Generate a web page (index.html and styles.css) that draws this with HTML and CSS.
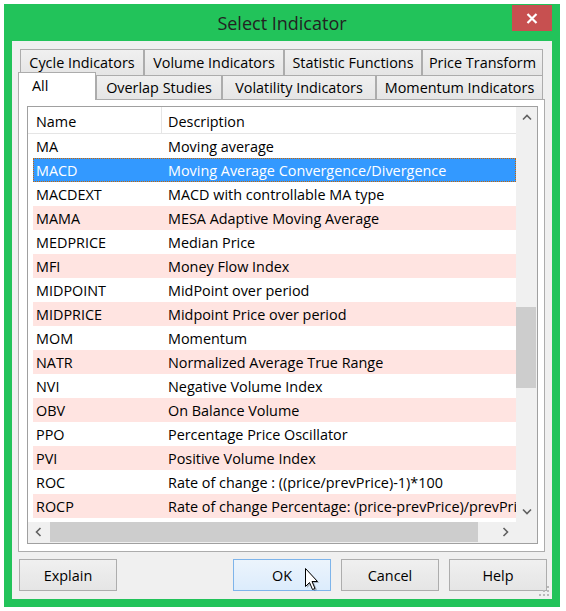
FILE: index.html
```html
<!DOCTYPE html>
<html>
<head>
<meta charset="utf-8">
<title>Select Indicator</title>
<link rel="stylesheet" href="styles.css">
</head>
<body>
<div class="window">
  <div class="titlebar">
    <div class="title">Select Indicator</div>
    <div class="close">
      <svg width="12" height="11" viewBox="0 0 12 11"><path d="M1.5 1 L10.5 10 M10.5 1 L1.5 10" stroke="#fff" stroke-width="2.2" fill="none"/></svg>
    </div>
  </div>
  <div class="client">
    <div class="tabctl">
      <div class="tabrow row-top">
        <div class="tab w-cycle">Cycle Indicators</div>
        <div class="tab w-volume">Volume Indicators</div>
        <div class="tab w-stat">Statistic Functions</div>
        <div class="tab w-price">Price Transform</div>
      </div>
      <div class="tabrow row-bottom">
        <div class="tab active w-all">All</div>
        <div class="tab w-overlap">Overlap Studies</div>
        <div class="tab w-volat">Volatility Indicators</div>
        <div class="tab w-mom">Momentum Indicators</div>
      </div>
      <div class="panel">
        <div class="listview">
          <div class="lv-main">
            <div class="lv-content">
              <div class="lv-header">
                <div class="hcell hname">Name</div>
                <div class="hcell hdesc">Description</div>
              </div>
              <div class="lv-rows">
                <div class="row"><div class="cell n">MA</div><div class="cell d">Moving average</div></div>
                <div class="row sel"><div class="cell n">MACD</div><div class="cell d">Moving Average Convergence/Divergence</div></div>
                <div class="row"><div class="cell n">MACDEXT</div><div class="cell d">MACD with controllable MA type</div></div>
                <div class="row alt"><div class="cell n">MAMA</div><div class="cell d">MESA Adaptive Moving Average</div></div>
                <div class="row"><div class="cell n">MEDPRICE</div><div class="cell d">Median Price</div></div>
                <div class="row alt"><div class="cell n">MFI</div><div class="cell d">Money Flow Index</div></div>
                <div class="row"><div class="cell n">MIDPOINT</div><div class="cell d">MidPoint over period</div></div>
                <div class="row alt"><div class="cell n">MIDPRICE</div><div class="cell d">Midpoint Price over period</div></div>
                <div class="row"><div class="cell n">MOM</div><div class="cell d">Momentum</div></div>
                <div class="row alt"><div class="cell n">NATR</div><div class="cell d">Normalized Average True Range</div></div>
                <div class="row"><div class="cell n">NVI</div><div class="cell d">Negative Volume Index</div></div>
                <div class="row alt"><div class="cell n">OBV</div><div class="cell d">On Balance Volume</div></div>
                <div class="row"><div class="cell n">PPO</div><div class="cell d">Percentage Price Oscillator</div></div>
                <div class="row alt"><div class="cell n">PVI</div><div class="cell d">Positive Volume Index</div></div>
                <div class="row"><div class="cell n">ROC</div><div class="cell d">Rate of change : ((price/prevPrice)-1)*100</div></div>
                <div class="row alt"><div class="cell n">ROCP</div><div class="cell d">Rate of change Percentage: (price-prevPrice)/prevPrice</div></div>
              </div>
            </div>
            <div class="vscroll">
              <div class="sb-btn"><svg width="10" height="7" viewBox="0 0 10 7"><polyline points="1,5.5 5,1.5 9,5.5" fill="none" stroke="#606060" stroke-width="1.6"/></svg></div>
              <div class="vthumb"></div>
              <div class="sb-space"></div>
              <div class="sb-btn"><svg width="10" height="7" viewBox="0 0 10 7"><polyline points="1,1.5 5,5.5 9,1.5" fill="none" stroke="#606060" stroke-width="1.6"/></svg></div>
            </div>
          </div>
          <div class="lv-bottom">
            <div class="hscroll">
              <div class="sb-btn hbtn"><svg width="7" height="10" viewBox="0 0 7 10"><polyline points="5.5,1 1.5,5 5.5,9" fill="none" stroke="#606060" stroke-width="1.6"/></svg></div>
              <div class="hthumb"></div>
              <div class="sb-space"></div>
              <div class="sb-btn hbtn"><svg width="7" height="10" viewBox="0 0 7 10"><polyline points="1.5,1 5.5,5 1.5,9" fill="none" stroke="#606060" stroke-width="1.6"/></svg></div>
            </div>
            <div class="corner"></div>
          </div>
        </div>
      </div>
    </div>
    <div class="buttons">
      <button class="btn btn-explain">Explain</button>
      <button class="btn btn-ok">OK</button>
      <button class="btn">Cancel</button>
      <button class="btn">Help</button>
    </div>
    <svg class="cursor" width="16" height="24" viewBox="0 0 16 24">
      <polygon points="2,2 2,20 6,16 9,23 12,22 9,15 14.5,15" fill="#000" opacity="0.25"/>
      <polygon points="0.5,0.5 0.5,18.5 4.5,14.5 7.5,21.5 10,20.5 7,13.5 12.5,13.5" fill="#fff" stroke="#000" stroke-width="1" stroke-linejoin="miter"/>
    </svg>
    <svg class="grip" width="12" height="12" viewBox="0 0 12 12">
      <rect x="9" y="1" width="2" height="2" fill="#b9b9b9"/>
      <rect x="5" y="5" width="2" height="2" fill="#b9b9b9"/>
      <rect x="9" y="5" width="2" height="2" fill="#b9b9b9"/>
      <rect x="1" y="9" width="2" height="2" fill="#b9b9b9"/>
      <rect x="5" y="9" width="2" height="2" fill="#b9b9b9"/>
      <rect x="9" y="9" width="2" height="2" fill="#b9b9b9"/>
    </svg>
  </div>
</div>
</body>
</html>
```

FILE: styles.css
```css
html, body {
  margin: 0;
  padding: 0;
  background: #ffffff;
}

body {
  font-family: "Open Sans", "Noto Sans", "DejaVu Sans", sans-serif;
  font-size: 14.4px;
  color: #000;
}

.window {
  margin: 4px 0 0 4px;
  width: 556px;
  height: 603px;
  box-sizing: border-box;
  background: #22c35a;
  padding: 0 8px 8px 8px;
  display: flex;
  flex-direction: column;
}

.titlebar {
  height: 37px;
  flex: none;
  display: grid;
  grid-template-columns: 1fr auto 1fr;
  align-items: start;
}

.title {
  grid-column: 2;
  font-size: 18px;
  line-height: 38px;
  color: #222;
  white-space: nowrap;
}

.close {
  grid-column: 3;
  justify-self: end;
  margin-top: 1px;
  width: 40px;
  height: 26px;
  background: #c75050;
  display: flex;
  align-items: center;
  justify-content: center;
}

.client {
  flex: 1;
  background: #f0f0f0;
  padding: 8px 7px 8px 6px;
  display: flex;
  flex-direction: column;
  position: relative;
}

.tabctl {
  width: 527px;
  display: flex;
  flex-direction: column;
}

.tabrow {
  display: flex;
  flex: none;
}

.row-top {
  padding-left: 2px;
  height: 26px;
}

.row-bottom {
  height: 24px;
}

.tab {
  box-sizing: border-box;
  border: 1px solid #acacac;
  border-bottom: 0;
  background: linear-gradient(#f0f0f0, #e5e5e5);
  display: flex;
  align-items: center;
  justify-content: center;
  white-space: nowrap;
  flex: none;
}

.row-top .tab { height: 26px; }
.row-bottom .tab { height: 24px; }

.row-bottom .tab.active {
  height: 28px;
  margin-top: -3px;
  background: #fff;
  justify-content: flex-start;
  padding-left: 13px;
  padding-bottom: 2px;
  position: relative;
  z-index: 1;
}

.w-cycle { width: 124px; }
.w-volume { width: 140px; }
.w-stat { width: 138px; }
.w-price { width: 121px; }
.w-all { width: 78px; }
.w-overlap { width: 126px; }
.w-volat { width: 154px; }
.w-mom { width: 167px; }

.panel {
  box-sizing: border-box;
  height: 453px;
  border: 1px solid #acacac;
  background: #fff;
  padding: 6px 6px 7px 8px;
}

.listview {
  box-sizing: border-box;
  width: 511px;
  height: 438px;
  border: 1px solid #a0a0a0;
  display: flex;
  flex-direction: column;
}

.lv-main {
  display: flex;
  height: 415px;
  flex: none;
}

.lv-content {
  width: 488px;
  overflow: hidden;
  background: #fff;
}

.lv-header {
  height: 26px;
  border-bottom: 1px solid #e5e5e5;
  display: flex;
}

.hcell {
  line-height: 26px;
  padding-top: 2px;
  box-sizing: border-box;
  white-space: nowrap;
}

.hname {
  width: 134px;
  padding-left: 8px;
  border-right: 1px solid #e5e5e5;
}

.hdesc {
  padding-left: 6px;
}

.row {
  margin-left: 5px;
  width: 483px;
  height: 24px;
  display: grid;
  grid-template-columns: 129px 1fr;
  align-items: center;
  overflow: hidden;
}

.cell {
  white-space: nowrap;
  overflow: hidden;
}

.cell.n { padding-left: 3px; }
.cell.d { padding-left: 6px; }

.row.alt { background: #ffe4e1; }

.row.sel {
  background: #3399ff;
  color: #fff;
  outline: 1px dotted #cc6600;
  outline-offset: -1px;
}

.vscroll {
  width: 21px;
  background: #f0f0f0;
  display: flex;
  flex-direction: column;
}

.sb-btn {
  height: 21px;
  flex: none;
  display: flex;
  align-items: center;
  justify-content: center;
}

.hbtn {
  width: 21px;
  height: 20px;
}

.sb-space { flex: 1; }

.vthumb {
  width: 20px;
  height: 81px;
  background: #cdcdcd;
  margin-top: 179px;
  flex: none;
}

.lv-bottom {
  display: flex;
  height: 21px;
  flex: none;
}

.hscroll {
  width: 488px;
  background: #f0f0f0;
  display: flex;
  align-items: flex-start;
}

.hthumb {
  width: 428px;
  height: 20px;
  margin-left: 1px;
  background: #cdcdcd;
  flex: none;
}

.corner {
  width: 21px;
  background: #f0f0f0;
}

.buttons {
  display: flex;
  gap: 10px;
  margin-top: 7px;
  margin-left: 1px;
  margin-right: -2px;
}

.btn {
  width: 98px;
  height: 32px;
  box-sizing: border-box;
  border: 1px solid #adadad;
  background: linear-gradient(#f0f0f0, #e5e5e5);
  font-family: "Open Sans", "Noto Sans", sans-serif;
  font-size: 14.4px;
  color: #000;
  padding: 0;
  margin: 0;
}

.btn-explain { margin-right: auto; }

.btn-ok {
  border-color: #7eb4ea;
  background: linear-gradient(#ecf4fc, #dcecfc);
}

.cursor {
  position: absolute;
  left: 293px;
  top: 527px;
}

.grip {
  position: absolute;
  right: 2px;
  bottom: 2px;
}
```
